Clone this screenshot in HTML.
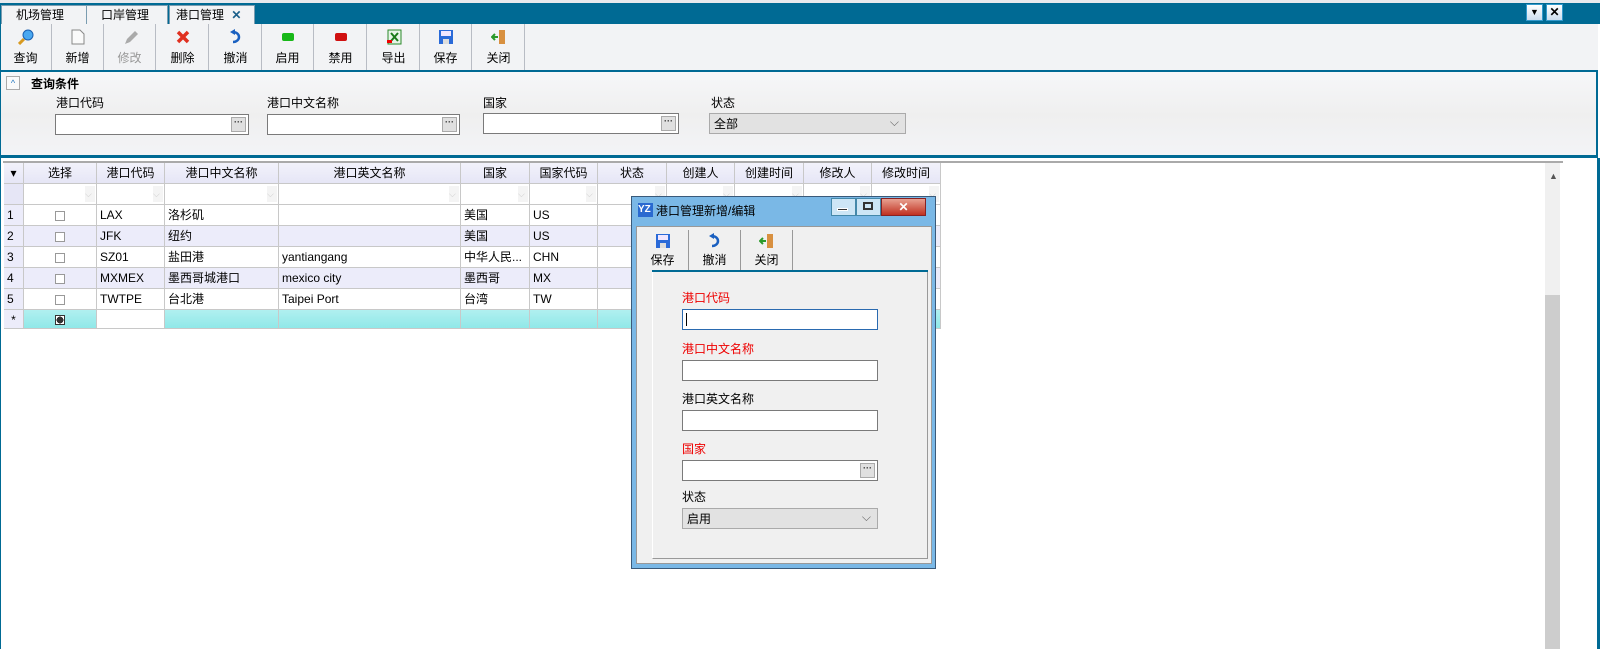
<!DOCTYPE html>
<html><head><meta charset="utf-8"><style>
*{box-sizing:border-box;margin:0;padding:0}
body{width:1600px;height:649px;overflow:hidden;background:#fff;font-family:"Liberation Sans","Noto Sans CJK SC",sans-serif;font-size:12px;line-height:16px;color:#000;position:relative}
.a{position:absolute}
.tab{position:absolute;top:5px;height:19px;background:#f2f3f5;border:1px solid #7a9cb0;border-bottom:none;padding:1px 0 0 14px;font-size:12px;white-space:nowrap}
.tb{position:absolute;top:24px;height:46px;width:52px;text-align:center;border-right:1px solid #b8bcc4}
.tb span{position:absolute;top:26px;left:0;right:0;font-size:12px}
.tb i{position:absolute;top:5px;left:18px;width:16px;height:16px}
.in{position:absolute;height:21px;background:#fff;border:1px solid #7a7a7a}
.dots{position:absolute;right:2px;top:2px;width:15px;height:15px;background:#e0e0e0;border:1px solid #aaa;font-size:9px;line-height:9px;text-align:center;color:#333;font-weight:bold}
.sel{position:absolute;height:21px;background:#e2e2e2;border:1px solid #aaa;padding:2px 4px}
.sel:after{content:"⌵";position:absolute;right:6px;top:0;color:#666;font-size:12px}
.c{position:absolute;border-right:1px solid #c8c8c8;border-bottom:1px solid #c8c8c8;padding:2px 3px;white-space:nowrap;overflow:hidden;height:21px;line-height:16px}
.h{background:linear-gradient(#f2f2fb,#e6e6f6);text-align:center}
.cb{display:inline-block;width:10px;height:10px;border:1px solid #999;background:#fff}
.red{color:#e00}
</style></head><body>
<div class="a" style="left:0;top:0;width:1600px;height:24px;background:#006a94;border-top:3px solid #e8eaee"></div>
<div class="tab" style="left:1px;width:86px">机场管理</div>
<div class="tab" style="left:86px;width:82px">口岸管理</div>
<div class="tab" style="left:169px;width:86px;padding-left:6px">港口管理 <b style="color:#1a5f8a;margin-left:4px">✕</b></div>
<div class="a" style="left:1526px;top:4px;width:17px;height:17px;background:linear-gradient(#fff,#cde);border:1px solid #39c;text-align:center;font-size:9px;line-height:15px">▼</div>
<div class="a" style="left:1546px;top:4px;width:17px;height:17px;background:linear-gradient(#fff,#cde);border:1px solid #39c;text-align:center;font-weight:bold;line-height:15px">✕</div>
<div class="a" style="left:0;top:24px;width:1598px;height:46px;background:#f2f3f5;border-left:1px solid #006a94"></div>
<div class="tb" style="left:0"><i><svg width="16" height="16"><circle cx="10" cy="6" r="5" fill="#4aa8f0" stroke="#1a5fb0"/><path d="M6 10 L1 15" stroke="#d89a20" stroke-width="3"/></svg></i><span>查询</span></div>
<div class="tb" style="left:52px"><i><svg width="16" height="16"><path d="M2 1h8l4 4v10H2z" fill="#fafafa" stroke="#888"/></svg></i><span>新增</span></div>
<div class="tb" style="left:104px;color:#999"><i><svg width="16" height="16"><path d="M3 15l2-5 8-8 3 3-8 8z" fill="#aaa"/></svg></i><span>修改</span></div>
<div class="tb" style="left:157px"><i><svg width="16" height="16"><path d="M3 3l10 10M13 3L3 13" stroke="#e03020" stroke-width="3.5"/></svg></i><span>删除</span></div>
<div class="tb" style="left:210px"><i><svg width="16" height="16"><path d="M5 3a6 5 0 1 1 0 10" fill="none" stroke="#1a60c0" stroke-width="2.5"/><path d="M2 3l5-3v6z" fill="#1a60c0"/></svg></i><span>撤消</span></div>
<div class="tb" style="left:262px"><i><svg width="16" height="16"><rect x="2" y="4" width="12" height="8" rx="2" fill="#18b818"/></svg></i><span>启用</span></div>
<div class="tb" style="left:315px"><i><svg width="16" height="16"><rect x="2" y="4" width="12" height="8" rx="2" fill="#d01010"/></svg></i><span>禁用</span></div>
<div class="tb" style="left:368px"><i><svg width="16" height="16"><rect x="2" y="1" width="13" height="14" fill="#e8f4e8" stroke="#2a8a2a"/><path d="M5 4l7 8M12 4l-7 8" stroke="#1a7a1a" stroke-width="2"/><rect x="1" y="11" width="5" height="3" fill="#e00"/></svg></i><span>导出</span></div>
<div class="tb" style="left:420px"><i><svg width="16" height="16"><rect x="1" y="1" width="14" height="14" fill="#2a6ad8"/><rect x="3" y="2" width="10" height="5" fill="#f0e6ff"/><rect x="5" y="10" width="6" height="5" fill="#ddd"/></svg></i><span>保存</span></div>
<div class="tb" style="left:473px"><i><svg width="16" height="16"><rect x="8" y="1" width="6" height="14" fill="#d89040"/><path d="M1 8h6M4 5l-3 3 3 3" stroke="#2a9a2a" stroke-width="2" fill="none"/></svg></i><span>关闭</span></div>
<div class="a" style="left:0;top:70px;width:1598px;height:2px;background:#006a94"></div>
<div class="a" style="left:0;top:72px;width:1598px;height:86px;background:linear-gradient(#f6f7f9,#efefef 50%,#f3f4f7);border-left:1px solid #006a94;border-right:2px solid #006a94"></div>
<div class="a" style="left:6px;top:76px;width:14px;height:14px;border:1px solid #aaa;background:#fafafa;font-size:9px;text-align:center;color:#2a7ac0;line-height:12px">^</div>
<div class="a" style="left:31px;top:76px;font-weight:bold">查询条件</div>
<div class="a" style="left:56px;top:95px">港口代码</div>
<div class="in" style="left:55px;top:114px;width:194px"><div class="dots">···</div></div>
<div class="a" style="left:267px;top:95px">港口中文名称</div>
<div class="in" style="left:267px;top:114px;width:193px"><div class="dots">···</div></div>
<div class="a" style="left:483px;top:95px">国家</div>
<div class="in" style="left:483px;top:113px;width:196px"><div class="dots">···</div></div>
<div class="a" style="left:711px;top:95px">状态</div>
<div class="sel" style="left:709px;top:113px;width:197px">全部</div>
<div class="a" style="left:0;top:155px;width:1598px;height:3px;background:#006a94"></div>
<div class="a" style="left:0;top:158px;width:1600px;height:491px;background:#fff;border-left:1px solid #006a94;border-right:3px solid #006a94"></div>
<div class="a" style="left:3px;top:161px;width:1560px;height:2px;background:#aaa"></div>
<div class="a" style="left:1545px;top:163px;width:15px;height:486px;background:#f0f0f0"></div>
<div class="a" style="left:1545px;top:295px;width:15px;height:354px;background:#cdcdcd"></div>
<div class="a" style="left:1549px;top:168px;font-size:9px;color:#555">▲</div>
<div id="g"></div>
<div class="a" style="left:631px;top:196px;width:305px;height:373px;background:#7ab8e6;border:1px solid #3a5a7a"></div>
<div class="a" style="left:638px;top:203px;width:15px;height:14px;background:#2a6ad0;color:#fff;font-size:10px;font-weight:bold;line-height:14px">YZ</div>
<div class="a" style="left:656px;top:203px;font-size:12px">港口管理新增/编辑</div>
<div class="a" style="left:831px;top:198px;width:25px;height:18px;background:#cde6f6;border:1px solid #48a"></div>
<div class="a" style="left:837px;top:208px;width:11px;height:3px;background:#333;border:1px solid #fff"></div>
<div class="a" style="left:856px;top:198px;width:25px;height:18px;background:#cde6f6;border:1px solid #48a"></div>
<div class="a" style="left:863px;top:202px;width:10px;height:8px;border:2px solid #333"></div>
<div class="a" style="left:881px;top:198px;width:45px;height:18px;background:linear-gradient(#e8a090,#c03020);border:1px solid #822;color:#fff;text-align:center;font-weight:bold;line-height:16px">✕</div>
<div class="a" style="left:636px;top:226px;width:296px;height:338px;background:#f0f0f0;border:1px solid #999"></div>
<div class="tb" style="left:637px;top:230px;height:40px;border-color:#999"><i style="top:3px"><svg width="16" height="16"><rect x="1" y="1" width="14" height="14" fill="#2a6ad8"/><rect x="3" y="2" width="10" height="5" fill="#f0e6ff"/><rect x="5" y="10" width="6" height="5" fill="#ddd"/></svg></i><span style="top:22px">保存</span></div>
<div class="tb" style="left:689px;top:230px;height:40px;border-color:#999"><i style="top:3px"><svg width="16" height="16"><path d="M5 3a6 5 0 1 1 0 10" fill="none" stroke="#1a60c0" stroke-width="2.5"/><path d="M2 3l5-3v6z" fill="#1a60c0"/></svg></i><span style="top:22px">撤消</span></div>
<div class="tb" style="left:741px;top:230px;height:40px;border-color:#999"><i style="top:3px"><svg width="16" height="16"><rect x="8" y="1" width="6" height="14" fill="#d89040"/><path d="M1 8h6M4 5l-3 3 3 3" stroke="#2a9a2a" stroke-width="2" fill="none"/></svg></i><span style="top:22px">关闭</span></div>
<div class="a" style="left:652px;top:270px;width:276px;height:2px;background:#006a94"></div>
<div class="a" style="left:652px;top:272px;width:276px;height:287px;border-left:1px solid #fff;border-bottom:1px solid #999;border-right:1px solid #999"></div>
<div class="a red" style="left:682px;top:290px">港口代码</div>
<div class="in" style="left:682px;top:309px;width:196px;border-color:#2a6ab0"><div class="a" style="left:3px;top:3px;width:1px;height:13px;background:#000"></div></div>
<div class="a red" style="left:682px;top:341px">港口中文名称</div>
<div class="in" style="left:682px;top:360px;width:196px"></div>
<div class="a" style="left:682px;top:391px">港口英文名称</div>
<div class="in" style="left:682px;top:410px;width:196px"></div>
<div class="a red" style="left:682px;top:441px">国家</div>
<div class="in" style="left:682px;top:460px;width:196px"><div class="dots">···</div></div>
<div class="a" style="left:682px;top:489px">状态</div>
<div class="sel" style="left:682px;top:508px;width:196px">启用</div>
<script>
var cols=[[4,20],[24,73],[97,68],[165,114],[279,182],[461,69],[530,68],[598,69],[667,68],[735,69],[804,68],[872,69]];
var hd=["▾","选择","港口代码","港口中文名称","港口英文名称","国家","国家代码","状态","创建人","创建时间","修改人","修改时间"];
var rows=[["1","","LAX","洛杉矶","","美国","US"],["2","","JFK","纽约","","美国","US"],["3","","SZ01","盐田港","yantiangang","中华人民...","CHN"],["4","","MXMEX","墨西哥城港口","mexico city","墨西哥","MX"],["5","","TWTPE","台北港","Taipei Port","台湾","TW"]];
var h="";
cols.forEach(function(c,i){h+='<div class="c h" style="left:'+c[0]+'px;top:163px;width:'+c[1]+'px">'+hd[i]+'</div>';
h+='<div class="c" style="left:'+c[0]+'px;top:184px;width:'+c[1]+'px;'+(i==0?'background:#e6e6f6':'')+'">'+(i>0?'<span style="position:absolute;right:1px;top:2px;width:10px;height:16px;background:#f4f4f4;color:#ccc;font-size:9px">⌵</span>':'')+'</div>';});
rows.forEach(function(r,j){var y=205+j*21;var bg=j%2?'#ececfa':'#fff';
cols.forEach(function(c,i){var t=i<7?r[i]:"";if(i==1)t='<span class="cb"></span>';
h+='<div class="c" style="left:'+c[0]+'px;top:'+y+'px;width:'+c[1]+'px;background:'+(i==0?'#ececfa':bg)+';'+(i==1?'text-align:center;padding-top:4px':'')+'">'+t+'</div>';});});
cols.forEach(function(c,i){var t=i==0?'*':'';if(i==1)t='<span class="cb" style="border-color:#333;background:radial-gradient(#333 60%,#fff 60%)"></span>';
h+='<div class="c" style="left:'+c[0]+'px;top:310px;width:'+c[1]+'px;height:19px;background:'+(i==0?'#ececfa':i==2?'#fff':'linear-gradient(#b0f0f0,#90e8e8)')+';text-align:center;'+(i==1?'padding-top:3px':'')+'">'+t+'</div>';});
document.getElementById('g').innerHTML=h;
</script>
</body></html>
